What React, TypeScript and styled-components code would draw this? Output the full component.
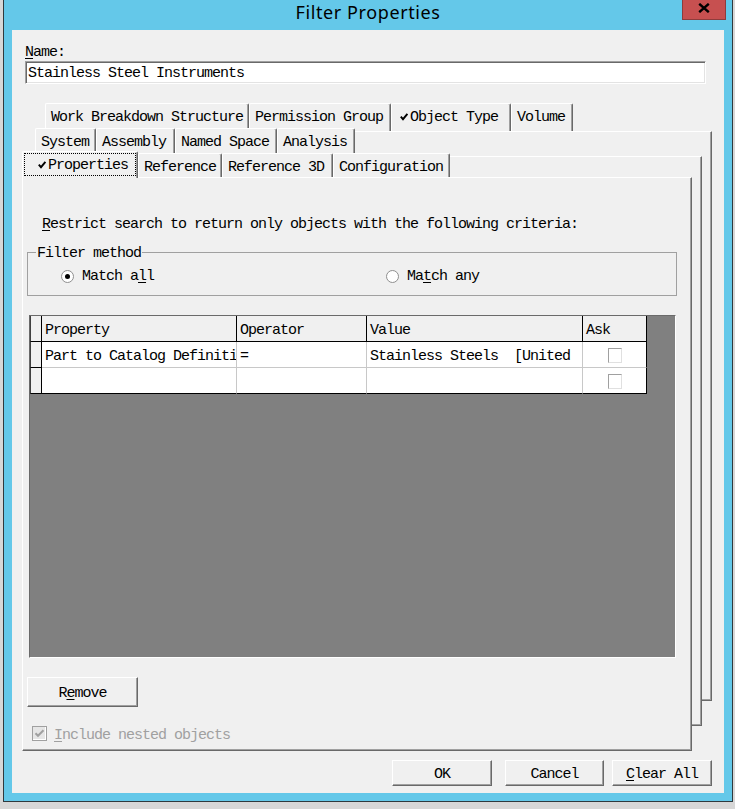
import React from "react";
import styled, { createGlobalStyle, css } from "styled-components";

const GlobalStyle = createGlobalStyle`
  html, body {
    margin: 0;
    padding: 0;
  }
  body {
    width: 735px;
    height: 809px;
    overflow: hidden;
    background: #d7d7d7;
  }
  *, *::before, *::after {
    box-sizing: border-box;
  }
`;

const mono = css`
  font-family: "Liberation Mono", "DejaVu Sans Mono", monospace;
  font-size: 15px;
  letter-spacing: -1px;
  line-height: 16px;
  color: #000;
`;

const raised = css`
  background: #f0f0f0;
  border-top: 1px solid #fff;
  border-left: 1px solid #fff;
  border-right: 1px solid #696969;
  border-bottom: 1px solid #696969;
  box-shadow: inset -1px -1px 0 #a0a0a0;
`;

/* ---------- window frame ---------- */

const Window = styled.div`
  width: 730px;
  height: 802px;
  margin-left: 3px;
  display: flex;
  flex-direction: column;
  background: #64c8e9;
  border: 1px solid #30393d;
  border-top: 0;
`;

const TitleBar = styled.div`
  flex: none;
  height: 30px;
  display: grid;
  grid-template-columns: 1fr auto 1fr;
  align-items: start;
`;

const Title = styled.div`
  grid-column: 2;
  font-family: "Noto Sans", "Open Sans", sans-serif;
  font-size: 18px;
  letter-spacing: 0.6px;
  line-height: 25px;
  color: #000;
  white-space: nowrap;
`;

const CloseButton = styled.div`
  grid-column: 3;
  justify-self: end;
  margin-right: 6px;
  width: 44px;
  height: 20px;
  padding-bottom: 3px;
  display: flex;
  align-items: center;
  justify-content: center;
  background: #c75050;
  border: 1px solid #8e3c3c;
  border-top: 0;
`;

const Client = styled.div`
  flex: 1;
  margin: 0 8px 8px;
  background: #f0f0f0;
  display: flex;
  flex-direction: column;
  ${mono}
`;

const Key = styled.span`
  text-decoration: underline;
  text-underline-offset: 2px;
`;

/* ---------- name field ---------- */

const FieldLabel = styled.div`
  margin: 15px 0 0 13px;
  height: 16px;
`;

const NameInput = styled.div`
  margin: 0 18px 0 13px;
  height: 23px;
  padding: 3px 0 0 2px;
  display: flex;
  align-items: center;
  background: #fff;
  border-top: 1px solid #a0a0a0;
  border-left: 1px solid #a0a0a0;
  border-right: 1px solid #fff;
  border-bottom: 1px solid #fff;
  box-shadow: inset 1px 1px 0 #696969, inset -1px -1px 0 #e3e3e3;
  white-space: pre;
`;

/* ---------- multi-row tab control ---------- */

const TabStack = styled.div`
  display: grid;
  margin: 19px 12px 0 10px;
`;

const Layer = styled.div<{ $m: string }>`
  grid-area: 1 / 1;
  display: flex;
  flex-direction: column;
  min-width: 0;
  margin: ${(p) => p.$m};
`;

const TabRow = styled.div<{ $indent: number; $h: number }>`
  flex: none;
  display: flex;
  height: ${(p) => p.$h}px;
  padding-left: ${(p) => p.$indent}px;
`;

const Tab = styled.div<{ $w: number; $pl?: number; $pt?: number }>`
  flex: none;
  width: ${(p) => p.$w}px;
  height: 100%;
  display: flex;
  align-items: center;
  padding-left: ${(p) => p.$pl ?? 5}px;
  padding-top: ${(p) => p.$pt ?? 0}px;
  background: #f0f0f0;
  border-top: 1px solid #fff;
  border-left: 1px solid #fff;
  border-right: 1px solid #696969;
  border-top-left-radius: 2px;
  border-top-right-radius: 2px;
  box-shadow: inset -1px 0 0 #a0a0a0;
  white-space: pre;
  overflow: hidden;
`;

const ActiveTab = styled.div<{ $w: number }>`
  position: relative;
  flex: none;
  width: ${(p) => p.$w}px;
  height: calc(100% + 3px);
  margin-top: -2px;
  padding: 1px 1px 2px 1px;
  background: #f0f0f0;
  border-top: 1px solid #fff;
  border-left: 1px solid #fff;
  border-right: 1px solid #696969;
  border-top-left-radius: 2px;
  border-top-right-radius: 2px;
  box-shadow: inset -1px 0 0 #a0a0a0;
  white-space: pre;
`;

const FocusRing = styled.div`
  height: 100%;
  display: flex;
  align-items: center;
  padding: 3px 0 0 13px;
  border: 1px dotted #000;
`;

const TabCheck = styled.svg`
  flex: none;
  display: block;
  margin-top: -2px;
`;

const Page = styled.div<{ $ml: number }>`
  flex: 1;
  margin-left: ${(p) => p.$ml}px;
  display: flex;
  flex-direction: column;
  ${raised}
`;

const FrontPage = styled(Page)`
  padding-bottom: 9px;
`;

/* ---------- page content ---------- */

const Prompt = styled.div`
  margin: 39px 0 0 19px;
  height: 16px;
  white-space: pre;
`;

const GroupBox = styled.fieldset`
  margin: 10px 14px 0 4px;
  padding: 7px 0 10px 0;
  min-inline-size: 0;
  border: 1px solid #a0a0a0;
`;

const GroupLegend = styled.legend`
  margin-left: 8px;
  padding: 3px 1px 0;
  line-height: 16px;
`;

const RadioRow = styled.div`
  display: grid;
  grid-template-columns: 325px auto;
  height: 16px;
  padding-left: 33px;
`;

const RadioOption = styled.div`
  display: flex;
  align-items: center;
  gap: 8px;
  white-space: pre;
`;

const RadioCircle = styled.span<{ $on?: boolean }>`
  flex: none;
  width: 13px;
  height: 13px;
  margin-top: -1px;
  border-radius: 50%;
  background: #fff;
  border: 1px solid #8f8f8f;
  display: flex;
  align-items: center;
  justify-content: center;
  &::after {
    content: "";
    width: 5px;
    height: 5px;
    border-radius: 50%;
    background: ${(p) => (p.$on ? "#000" : "transparent")};
  }
`;

const GridFrame = styled.div`
  margin: 19px 15px 0 6px;
  height: 343px;
  background: #808080;
  border-top: 1px solid #6a6a6a;
  border-left: 1px solid #6a6a6a;
  border-right: 1px solid #fff;
  border-bottom: 1px solid #fff;
`;

const GridTable = styled.div`
  display: grid;
  justify-content: start;
  grid-template-columns: 12px 195px 130px 216px 64px;
  grid-auto-rows: 26px;
`;

const SelectorCell = styled.div`
  background: #f0f0f0;
  border-left: 1px solid #404040;
  border-right: 1px solid #000;
  border-bottom: 1px solid #000;
`;

const HeadCell = styled.div`
  display: flex;
  align-items: center;
  padding: 5px 0 0 3px;
  background: #f0f0f0;
  border-right: 1px solid #000;
  border-bottom: 1px solid #000;
  white-space: pre;
  overflow: hidden;
`;

const DataCell = styled.div<{ $lastRow?: boolean; $lastCol?: boolean; $center?: boolean }>`
  display: flex;
  align-items: center;
  justify-content: ${(p) => (p.$center ? "center" : "flex-start")};
  padding: ${(p) => (p.$center ? "0" : "5px 0 0 3px")};
  background: #fff;
  border-right: 1px solid ${(p) => (p.$lastCol ? "#000" : "#c8c8c8")};
  border-bottom: 1px solid ${(p) => (p.$lastRow ? "#000" : "#c8c8c8")};
  white-space: pre;
  overflow: hidden;
`;

const CellCheckbox = styled.span`
  width: 14px;
  height: 15px;
  margin-top: 1px;
  background: #fff;
  border-top: 1px solid #a0a0a0;
  border-left: 1px solid #a0a0a0;
  border-right: 1px solid #e0e0e0;
  border-bottom: 1px solid #e0e0e0;
`;

const PushButton = styled.div<{ $w: number; $h: number; $ml?: number }>`
  flex: none;
  width: ${(p) => p.$w}px;
  height: ${(p) => p.$h}px;
  margin-left: ${(p) => p.$ml ?? 0}px;
  padding-top: 4px;
  display: flex;
  align-items: center;
  justify-content: center;
  white-space: pre;
  ${raised}
`;

const RemoveButton = styled(PushButton)`
  margin-top: 19px;
  margin-left: 4px;
`;

const NestedRow = styled.div`
  margin: 19px 0 0 9px;
  height: 15px;
  display: flex;
  align-items: center;
  gap: 7px;
  color: #a0a0a0;
  white-space: pre;
`;

const NestedLabel = styled.span`
  padding-top: 4px;
`;

const DisabledBox = styled.span`
  flex: none;
  width: 15px;
  height: 15px;
  display: flex;
  align-items: center;
  justify-content: center;
  background: #e6e6e6;
  border: 1px solid #a0a0a0;
  box-shadow: inset -1px -1px 0 #fff;
`;

const DialogButtons = styled.div`
  display: flex;
  justify-content: flex-end;
  margin: 9px 12px 0 0;
`;

/* ---------- drawings ---------- */

const CheckMark = () => (
  <TabCheck width={10} height={8} viewBox="0 0 10 8">
    <path d="M0.8 3.6 L3 6.2 L7.4 0.9" fill="none" stroke="#000" strokeWidth="1.9" />
  </TabCheck>
);

const CloseGlyph = () => (
  <svg width={12} height={10} viewBox="0 0 12 10">
    <path d="M1.2 0.8 L10.8 9.2 M10.8 0.8 L1.2 9.2" stroke="#000" strokeWidth="2.4" />
  </svg>
);

const GrayCheck = () => (
  <svg width={11} height={9} viewBox="0 0 11 9">
    <path d="M1.5 4.2 L4 6.8 L9.5 1.2" fill="none" stroke="#a0a0a0" strokeWidth="2" />
  </svg>
);

/* ---------- data ---------- */

const backTabs = [
  { label: "Work Breakdown Structure", w: 204 },
  { label: "Permission Group", w: 142 },
  { label: "Object Type", w: 120, checked: true },
  { label: "Volume", w: 62 },
];

const middleTabs = [
  { label: "System", w: 61 },
  { label: "Assembly", w: 79 },
  { label: "Named Space", w: 102 },
  { label: "Analysis", w: 78 },
];

const frontTabs = [
  { label: "Reference", w: 84 },
  { label: "Reference 3D", w: 111 },
  { label: "Configuration", w: 117 },
];

type Row = { property: string; operator: string; value: string };

const rows: Row[] = [
  { property: "Part to Catalog Definiti", operator: "=", value: "Stainless Steels  [United" },
  { property: "", operator: "", value: "" },
];

export default function App() {
  return (
    <>
      <GlobalStyle />
      <Window>
        <TitleBar>
          <Title>Filter Properties</Title>
          <CloseButton>
            <CloseGlyph />
          </CloseButton>
        </TitleBar>
        <Client>
          <FieldLabel>
            <Key>N</Key>ame:
          </FieldLabel>
          <NameInput>Stainless Steel Instruments</NameInput>

          <TabStack>
            <Layer $m="0 0 50px 0">
              <TabRow $indent={23} $h={28}>
                {backTabs.map((t) => (
                  <Tab key={t.label} $w={t.w} $pl={t.checked ? 8 : 5} $pt={1}>
                    {t.checked && <CheckMark />}
                    {t.label}
                  </Tab>
                ))}
              </TabRow>
              <Page $ml={20} />
            </Layer>

            <Layer $m="25px 10px 25px 0">
              <TabRow $indent={13} $h={28}>
                {middleTabs.map((t) => (
                  <Tab key={t.label} $w={t.w} $pt={1}>
                    {t.label}
                  </Tab>
                ))}
              </TabRow>
              <Page $ml={10} />
            </Layer>

            <Layer $m="50px 20px 0 0">
              <TabRow $indent={0} $h={24}>
                <ActiveTab $w={116}>
                  <FocusRing>
                    <CheckMark />
                    Properties
                  </FocusRing>
                </ActiveTab>
                {frontTabs.map((t) => (
                  <Tab key={t.label} $w={t.w} $pt={4}>
                    {t.label}
                  </Tab>
                ))}
              </TabRow>
              <FrontPage $ml={0}>
                <Prompt>
                  <Key>R</Key>estrict search to return only objects with the following criteria:
                </Prompt>

                <GroupBox>
                  <GroupLegend>Filter method</GroupLegend>
                  <RadioRow>
                    <RadioOption>
                      <RadioCircle $on />
                      <span>
                        Match a<Key>l</Key>l
                      </span>
                    </RadioOption>
                    <RadioOption>
                      <RadioCircle />
                      <span>
                        Ma<Key>t</Key>ch any
                      </span>
                    </RadioOption>
                  </RadioRow>
                </GroupBox>

                <GridFrame>
                  <GridTable>
                    <SelectorCell />
                    <HeadCell>Property</HeadCell>
                    <HeadCell>Operator</HeadCell>
                    <HeadCell>Value</HeadCell>
                    <HeadCell>Ask</HeadCell>
                    {rows.map((r, i) => {
                      const last = i === rows.length - 1;
                      return (
                        <React.Fragment key={i}>
                          <SelectorCell />
                          <DataCell $lastRow={last}>{r.property}</DataCell>
                          <DataCell $lastRow={last}>{r.operator}</DataCell>
                          <DataCell $lastRow={last}>{r.value}</DataCell>
                          <DataCell $lastRow={last} $lastCol $center>
                            <CellCheckbox />
                          </DataCell>
                        </React.Fragment>
                      );
                    })}
                  </GridTable>
                </GridFrame>

                <RemoveButton $w={111} $h={30}>
                  R<Key>e</Key>move
                </RemoveButton>

                <NestedRow>
                  <DisabledBox>
                    <GrayCheck />
                  </DisabledBox>
                  <NestedLabel>
                    <Key>I</Key>nclude nested objects
                  </NestedLabel>
                </NestedRow>
              </FrontPage>
            </Layer>
          </TabStack>

          <DialogButtons>
            <PushButton $w={100} $h={26}>OK</PushButton>
            <PushButton $w={99} $h={26} $ml={13}>Cancel</PushButton>
            <PushButton $w={100} $h={26} $ml={8}>
              <Key>C</Key>lear All
            </PushButton>
          </DialogButtons>
        </Client>
      </Window>
    </>
  );
}
